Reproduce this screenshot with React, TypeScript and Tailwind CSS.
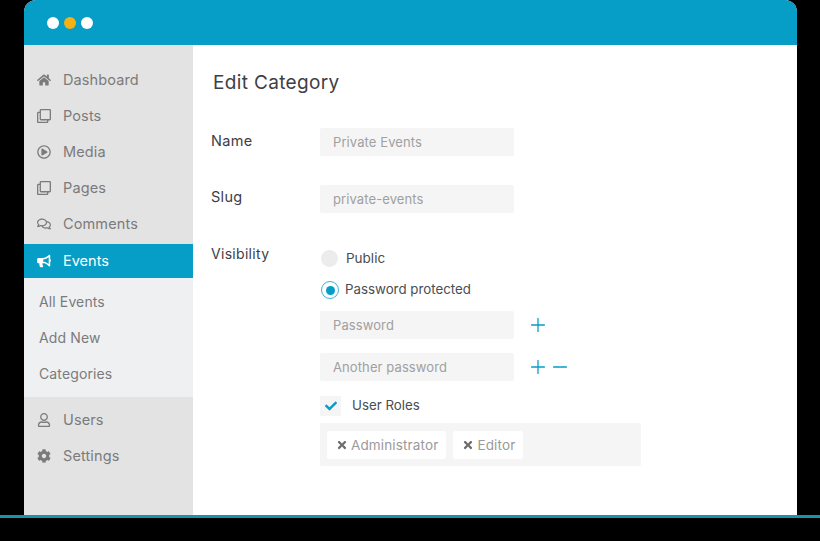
import { Minus, Plus } from 'lucide-react'
import {
  FaBullhorn,
  FaCheck,
  FaCog,
  FaHome,
  FaRegClone,
  FaRegComments,
  FaRegPlayCircle,
  FaRegUser,
  FaTimes,
} from 'react-icons/fa'
import type { ComponentType } from 'react'

type NavItem = { label: string; icon: ComponentType<{ className?: string }> }

const topNav: NavItem[] = [
  { label: 'Dashboard', icon: FaHome },
  { label: 'Posts', icon: FaRegClone },
  { label: 'Media', icon: FaRegPlayCircle },
  { label: 'Pages', icon: FaRegClone },
  { label: 'Comments', icon: FaRegComments },
]

const bottomNav: NavItem[] = [
  { label: 'Users', icon: FaRegUser },
  { label: 'Settings', icon: FaCog },
]

const subNav = ['All Events', 'Add New', 'Categories']

function NavRow({ item }: { item: NavItem }) {
  const Icon = item.icon
  return (
    <div className="flex h-9 items-center text-[#7b7b7b]">
      <div className="flex w-[39px] justify-center">
        <Icon className="h-[14px] w-[14px]" />
      </div>
      <span className="text-[14.5px] tracking-[0.12px]">{item.label}</span>
    </div>
  )
}

function Field({ value }: { value: string }) {
  return (
    <div className="flex h-[28px] w-[194px] items-center rounded-[2px] bg-[#f5f5f5] pl-[13px] pt-[2px] text-[13px] tracking-[0.1px] text-[#a0a0a0]">
      {value}
    </div>
  )
}

function Chip({ label }: { label: string }) {
  return (
    <div className="flex h-[28px] items-center gap-[3px] rounded-[2px] bg-white pl-[9px] pr-[8px] pt-[1px] text-[13.5px] tracking-[0.14px] text-[#9a9a9a]">
      <FaTimes className="h-[12px] w-[12px] text-[#6e6e6e]" />
      {label}
    </div>
  )
}

export default function App() {
  return (
    <div className="flex h-[541px] w-[820px] flex-col overflow-hidden bg-black font-['Inter',sans-serif]">
      <div className="mx-[24px] flex h-[515px] w-[773px] flex-col overflow-hidden rounded-t-[12px] bg-white">
        {/* Title bar */}
        <div className="flex h-[45px] shrink-0 items-center gap-[5px] bg-[#069dc6] pl-[23px]">
          <span className="h-[12px] w-[12px] rounded-full bg-white"></span>
          <span className="h-[12px] w-[12px] rounded-full bg-[#f5b014]"></span>
          <span className="h-[12px] w-[12px] rounded-full bg-white"></span>
        </div>

        <div className="flex flex-1">
          {/* Sidebar */}
          <aside className="w-[169px] shrink-0 bg-[#e3e3e3] pt-[17px]">
            {topNav.map((item) => (
              <NavRow key={item.label} item={item} />
            ))}
            <div className="mt-[2px] flex h-[34px] items-center bg-[#069dc6] text-white">
              <div className="flex w-[39px] justify-center">
                <FaBullhorn className="h-[14px] w-[14px]" />
              </div>
              <span className="text-[14.5px] tracking-[0.02px]">Events</span>
            </div>
            <div className="bg-[#eff0f2] pb-[5px] pt-[6px]">
              {subNav.map((label) => (
                <div key={label} className="flex h-9 items-center pb-[2px] pl-[15px] text-[14px] tracking-[0.12px] text-[#7b7b7b]">
                  {label}
                </div>
              ))}
            </div>
            <div className="pt-[5px]">
              {bottomNav.map((item) => (
                <NavRow key={item.label} item={item} />
              ))}
            </div>
          </aside>

          {/* Form */}
          <main className="flex-1 pl-[18px] pt-[23px] text-[#3c4046]">
            <h1 className="ml-[2px] h-[28px] pt-[1px] text-[19px] leading-[28px] tracking-[0.35px]">Edit Category</h1>

            <div className="mt-[32px] flex h-[28px]">
              <label className="w-[109px] text-[14.5px] leading-[26px] tracking-[0.3px]">Name</label>
              <Field value="Private Events" />
            </div>
            <div className="mt-[29px] flex h-[28px]">
              <label className="w-[109px] text-[14.5px] leading-[24px] tracking-[0.3px]">Slug</label>
              <Field value="private-events" />
            </div>

            <div className="mt-[29px] flex">
              <label className="w-[109px] text-[14px] leading-[24px] tracking-[0.3px]">Visibility</label>
              <div className="flex flex-col">
                <div className="mt-[5px] flex h-[22px] items-center text-[13.5px] text-[#4a4d52]">
                  <span className="ml-[1px] h-[17px] w-[17px] rounded-full bg-[#ececec]"></span>
                  <span className="ml-[8px]">Public</span>
                </div>
                <div className="mt-[10px] flex h-[22px] items-center text-[13.3px] text-[#4a4d52]">
                  <span className="ml-[1px] flex h-[18px] w-[18px] items-center justify-center rounded-full border border-[#3fb3d2] bg-white">
                    <span className="h-[9px] w-[9px] rounded-full bg-[#069dc6]"></span>
                  </span>
                  <span className="ml-[6px]">Password protected</span>
                </div>
                <div className="mt-[10px] flex items-center">
                  <Field value="Password" />
                  <Plus className="ml-[13px] h-[22px] w-[22px] text-[#069dc6]" strokeWidth={1.4} />
                </div>
                <div className="mt-[14px] flex items-center">
                  <Field value="Another password" />
                  <Plus className="ml-[13px] h-[22px] w-[22px] text-[#069dc6]" strokeWidth={1.4} />
                  <Minus className="h-[22px] w-[22px] text-[#069dc6]" strokeWidth={1.4} />
                </div>
                <div className="mt-[15px] flex h-[20px] items-center text-[13.3px] text-[#4a4d52]">
                  <span className="flex h-[20px] w-[21px] items-center justify-center bg-[#f5f5f5]">
                    <FaCheck className="h-[12px] w-[12px] text-[#069dc6]" />
                  </span>
                  <span className="ml-[11px]">User Roles</span>
                </div>
                <div className="mt-[7px] flex h-[43px] w-[321px] items-center gap-[7px] rounded-[2px] bg-[#f5f5f5] pl-[7px]">
                  <Chip label="Administrator" />
                  <Chip label="Editor" />
                </div>
              </div>
            </div>
          </main>
        </div>
      </div>
      <div className="h-[3px] w-full shrink-0 bg-[#1793ad]"></div>
    </div>
  )
}
